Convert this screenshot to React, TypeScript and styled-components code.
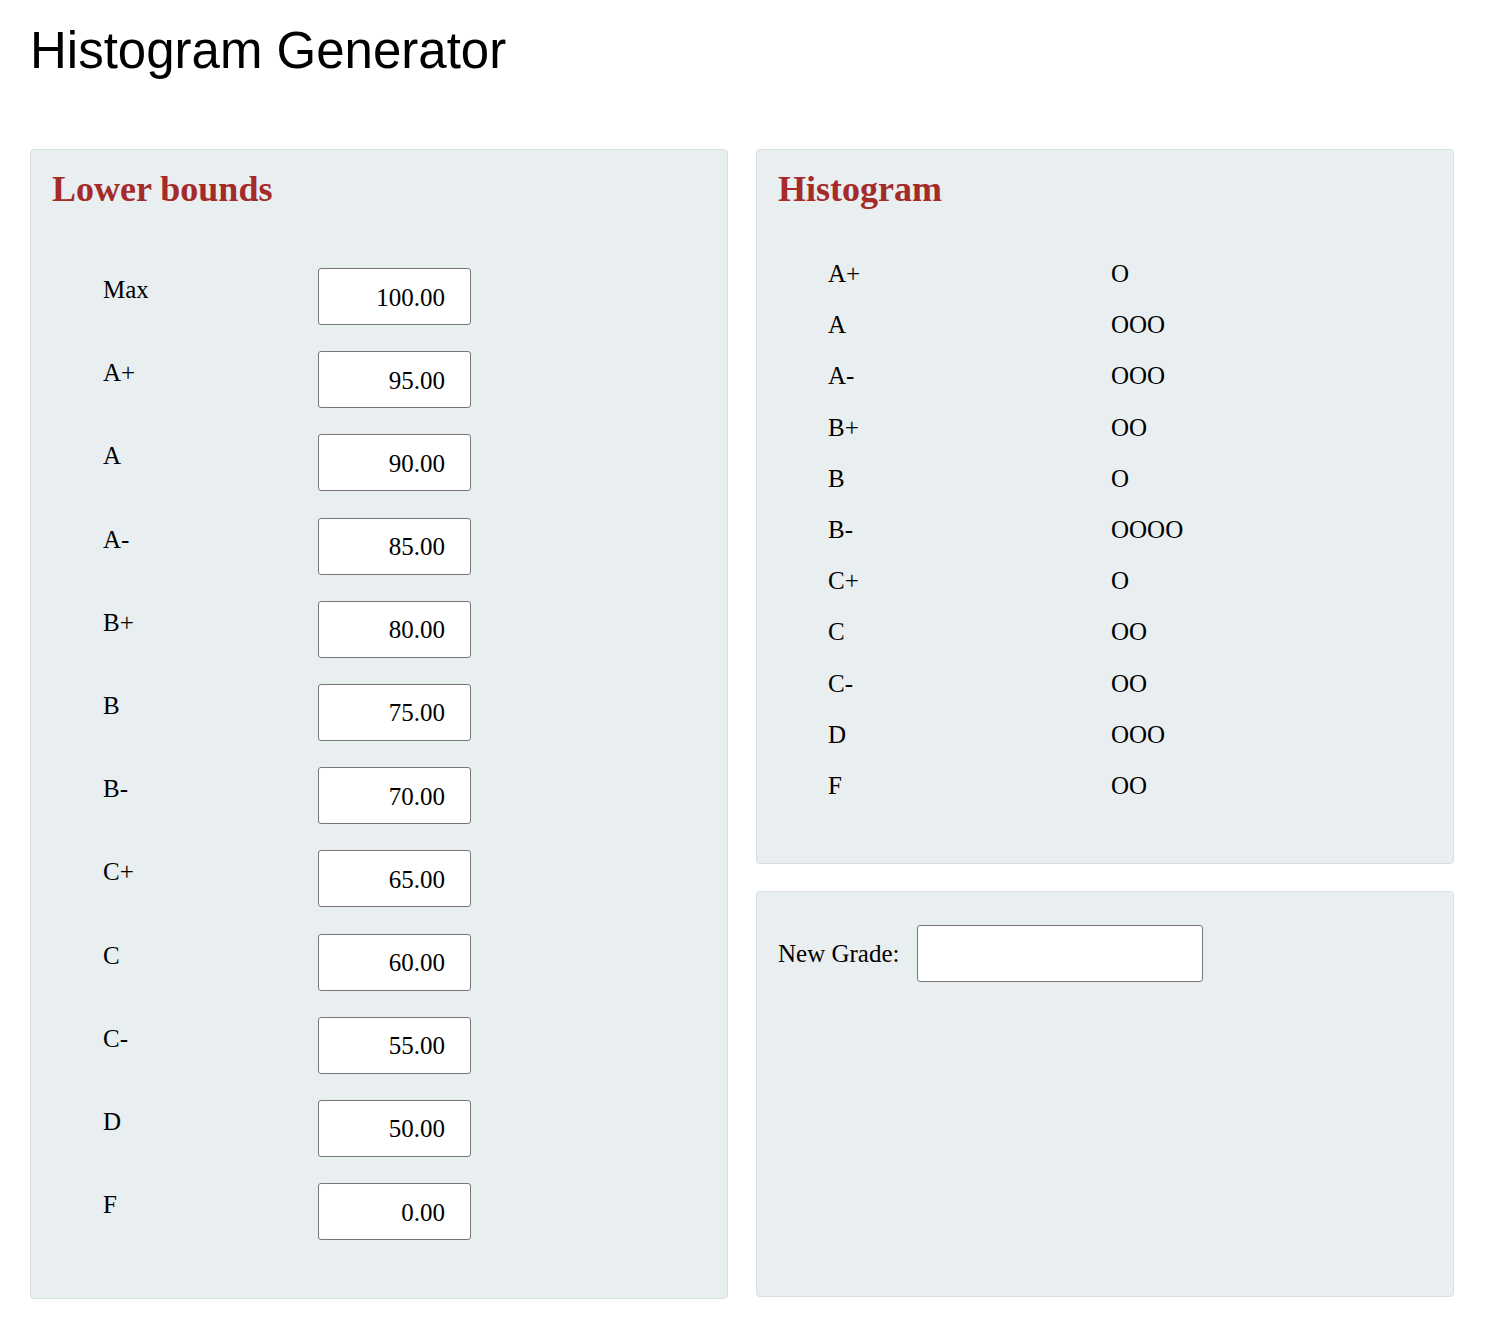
import React from "react";
import styled, { createGlobalStyle } from "styled-components";

const GlobalStyle = createGlobalStyle`
  *, *::before, *::after { box-sizing: border-box; }
  html, body { margin: 0; padding: 0; background: #ffffff; }
  body {
    font-family: "Liberation Serif", "Times New Roman", serif;
    color: #000000;
  }
`;

const Page = styled.div`
  padding: 25px 30px 40px 30px;
`;

const Title = styled.h1`
  margin: 0 0 73px 0;
  font-family: "Liberation Sans", Arial, sans-serif;
  font-size: 51px;
  font-weight: 400;
  line-height: 1;
  color: #000000;
`;

const Columns = styled.div`
  display: grid;
  grid-template-columns: 698px 698px;
  column-gap: 28px;
  align-items: start;
`;

const RightColumn = styled.div`
  display: flex;
  flex-direction: column;
  gap: 27px;
`;

const Panel = styled.section<{ $padBottom?: number; $height?: number }>`
  background: #e9eef1;
  border: 1px solid #d6dee3;
  border-radius: 4px;
  padding: 21px 21px ${(p) => (p.$padBottom ?? 21)}px 21px;
  ${(p) => (p.$height ? `height: ${p.$height}px;` : "")}
`;

const PanelTitle = styled.h2`
  margin: 0;
  font-family: "Liberation Serif", "Times New Roman", serif;
  font-size: 36px;
  font-weight: 700;
  line-height: 1;
  color: #a52a2a;
`;

const BoundsGrid = styled.div`
  display: grid;
  grid-template-columns: 215px 153px;
  row-gap: 26.2px;
  padding-left: 51px;
  margin-top: 61px;
`;

const BoundLabel = styled.label`
  font-size: 25px;
  line-height: 1;
  padding-top: 9px;
`;

const NumberInput = styled.input`
  width: 153px;
  height: 57px;
  margin: 0;
  border: 1px solid #767676;
  border-radius: 3px;
  background: #ffffff;
  font-family: "Liberation Serif", "Times New Roman", serif;
  font-size: 25px;
  color: #000000;
  text-align: right;
  padding: 2px 25px 0 0;
  outline: none;
`;

const HistogramGrid = styled.div`
  display: grid;
  grid-template-columns: 283px auto;
  grid-auto-rows: 51.2px;
  padding-left: 50px;
  margin-top: 41px;
  font-size: 25px;
  line-height: 51.2px;
`;

const HistLabel = styled.div``;

const HistBar = styled.div`
  letter-spacing: 0;
`;

const GradeForm = styled.div`
  display: flex;
  align-items: center;
  padding-top: 12px;
`;

const GradeLabel = styled.label`
  width: 139px;
  font-size: 25px;
  line-height: 1;
`;

const GradeInput = styled.input`
  width: 286px;
  height: 57px;
  margin: 0;
  border: 1px solid #767676;
  border-radius: 3px;
  background: #ffffff;
  font-family: "Liberation Serif", "Times New Roman", serif;
  font-size: 25px;
  padding: 0 10px;
  outline: none;
`;

const bounds: [string, string][] = [
  ["Max", "100.00"],
  ["A+", "95.00"],
  ["A", "90.00"],
  ["A-", "85.00"],
  ["B+", "80.00"],
  ["B", "75.00"],
  ["B-", "70.00"],
  ["C+", "65.00"],
  ["C", "60.00"],
  ["C-", "55.00"],
  ["D", "50.00"],
  ["F", "0.00"],
];

const histogram: [string, number][] = [
  ["A+", 1],
  ["A", 3],
  ["A-", 3],
  ["B+", 2],
  ["B", 1],
  ["B-", 4],
  ["C+", 1],
  ["C", 2],
  ["C-", 2],
  ["D", 3],
  ["F", 2],
];

export default function App() {
  return (
    <>
      <GlobalStyle />
      <Page>
        <Title>Histogram Generator</Title>
        <Columns>
          <Panel $padBottom={58}>
            <PanelTitle>Lower bounds</PanelTitle>
            <BoundsGrid>
              {bounds.map(([label, value]) => (
                <React.Fragment key={label}>
                  <BoundLabel>{label}</BoundLabel>
                  <NumberInput type="text" defaultValue={value} />
                </React.Fragment>
              ))}
            </BoundsGrid>
          </Panel>
          <RightColumn>
            <Panel $padBottom={52}>
              <PanelTitle>Histogram</PanelTitle>
              <HistogramGrid>
                {histogram.map(([label, count]) => (
                  <React.Fragment key={label}>
                    <HistLabel>{label}</HistLabel>
                    <HistBar>{"O".repeat(count)}</HistBar>
                  </React.Fragment>
                ))}
              </HistogramGrid>
            </Panel>
            <Panel $height={406}>
              <GradeForm>
                <GradeLabel>New Grade:</GradeLabel>
                <GradeInput type="text" />
              </GradeForm>
            </Panel>
          </RightColumn>
        </Columns>
      </Page>
    </>
  );
}
